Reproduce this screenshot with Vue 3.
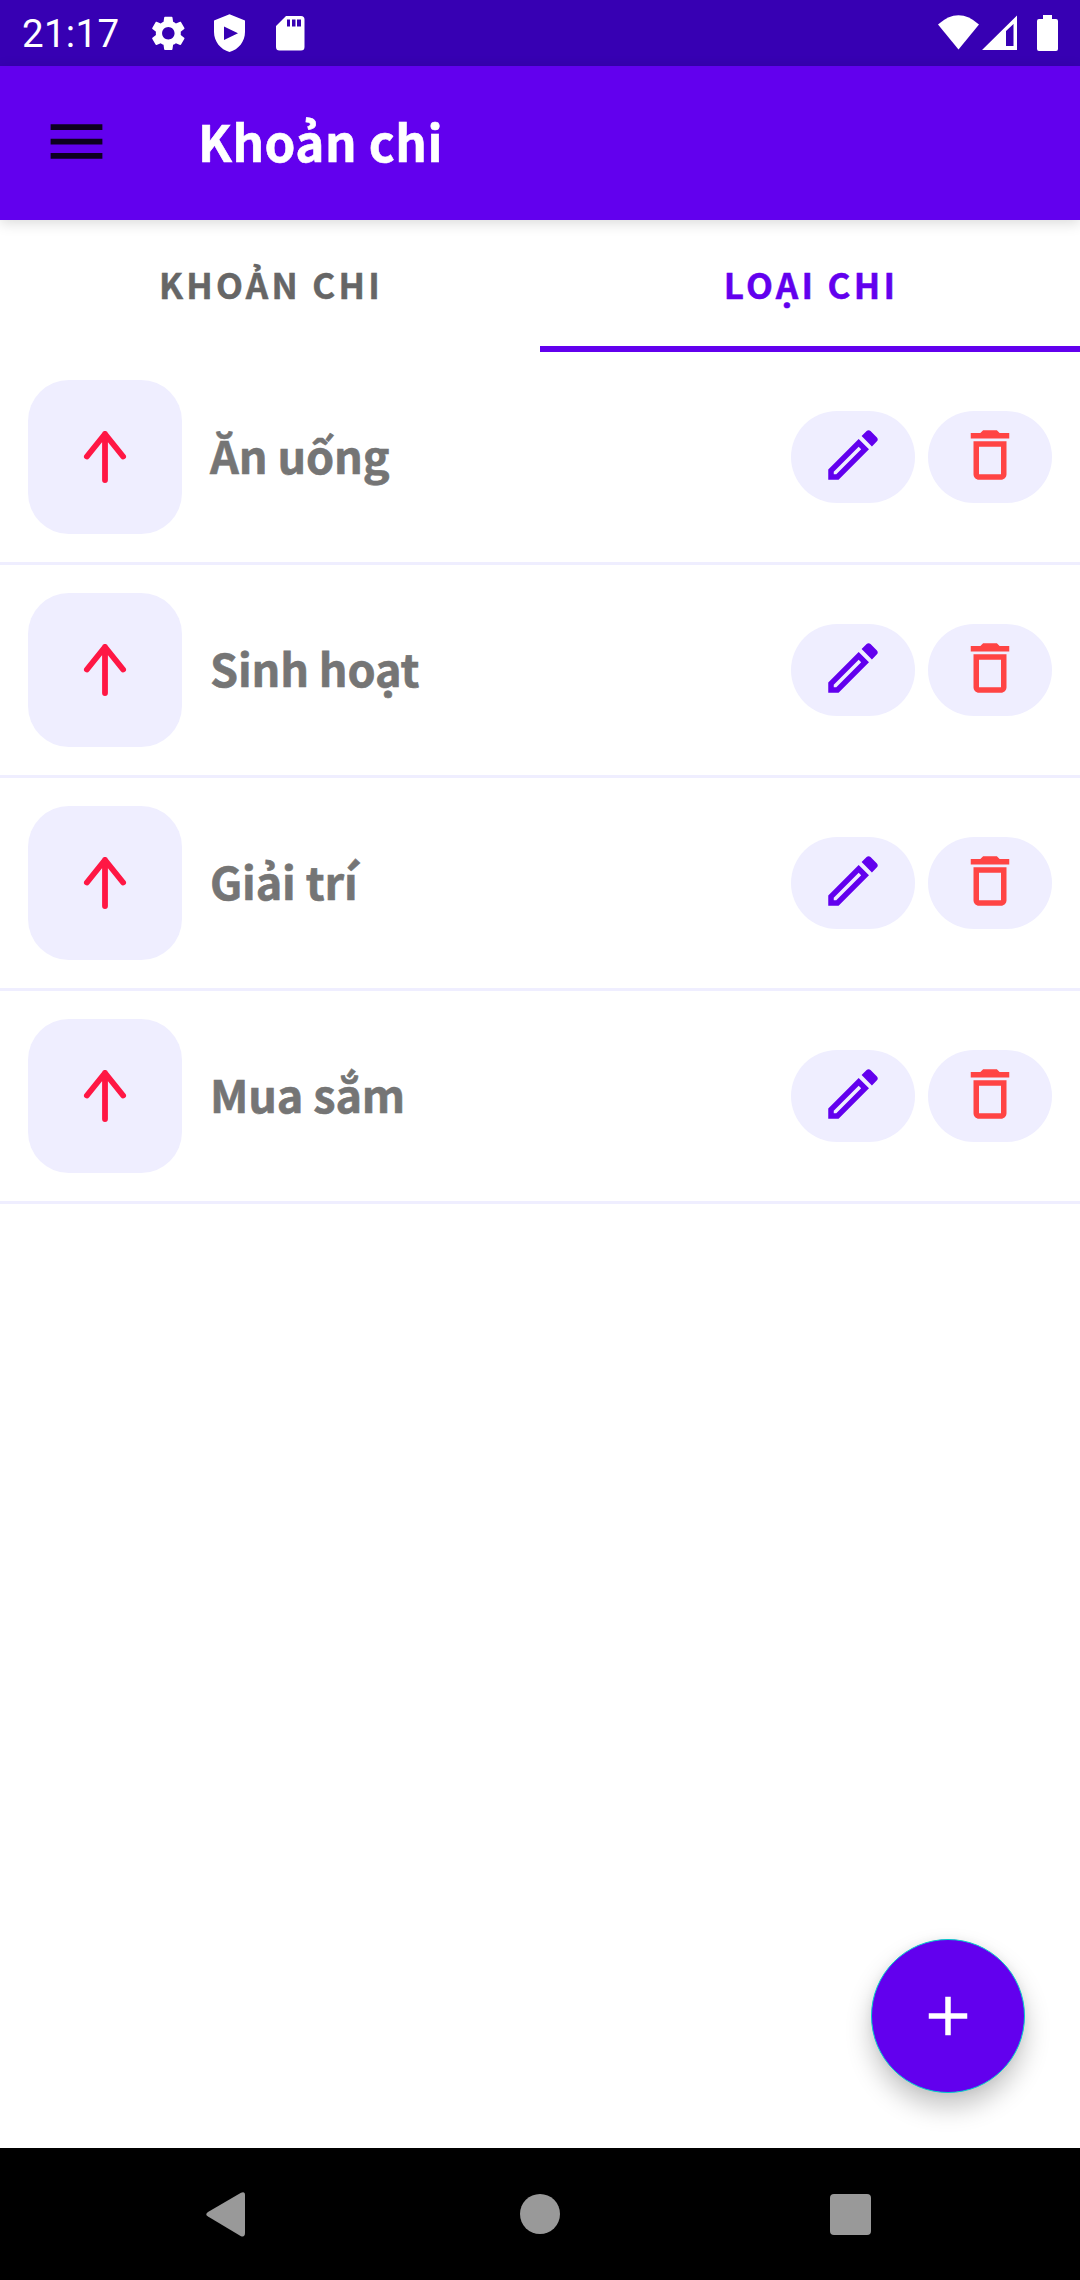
<script setup>
const tabs = [
  { label: 'KHOẢN CHI', active: false },
  { label: 'LOẠI CHI', active: true },
]
const categories = ['Ăn uống', 'Sinh hoạt', 'Giải trí', 'Mua sắm']
</script>

<template>
  <div class="screen">
    <header class="status">
      <span class="clock">21:17</span>
      <svg class="status-icons" width="160" height="66" viewBox="0 0 160 66" fill="#fff">
        <path
          transform="translate(7.500 12.5) scale(1.735)"
          d="M19.14 12.94c.04-.3.06-.61.06-.94 0-.32-.02-.64-.07-.94l2.03-1.58c.18-.14.23-.41.12-.61l-1.92-3.32c-.12-.22-.37-.29-.59-.22l-2.39.96c-.5-.38-1.03-.7-1.62-.94l-.36-2.54c-.04-.24-.24-.41-.48-.41h-3.84c-.24 0-.43.17-.47.41l-.36 2.54c-.59.24-1.13.57-1.62.94l-2.39-.96c-.22-.08-.47 0-.59.22L2.74 8.87c-.12.21-.08.47.12.61l2.03 1.58c-.05.3-.09.63-.09.94s.02.64.07.94l-2.03 1.58c-.18.14-.23.41-.12.61l1.92 3.32c.12.22.37.29.59.22l2.39-.96c.5.38 1.03.7 1.62.94l.36 2.54c.05.24.24.41.48.41h3.84c.24 0 .44-.17.47-.41l.36-2.54c.59-.24 1.13-.56 1.62-.94l2.39.96c.22.08.47 0 .59-.22l1.92-3.32c.12-.22.07-.47-.12-.61l-2.01-1.58zM12 15.6c-1.98 0-3.6-1.62-3.6-3.6s1.62-3.6 3.6-3.6 3.6 1.62 3.6 3.6-1.62 3.6-3.6 3.6z"
        />
        <path
          fill-rule="evenodd"
          d="M89.500 14.300 L105 20.500 V32 C105 41.500 98.500 49.500 89.500 52 C80.500 49.500 74 41.500 74 32 V20.500 Z M84 26.500 V40 L98 33.200 Z"
        />
        <path
          fill-rule="evenodd"
          d="M146 16 H161 Q164.500 16 164.500 19.500 V47 Q164.500 50.500 161 50.500 H139.500 Q136 50.500 136 47 V26 Z M147 19.500 V26.500 H150 V19.500 Z M152 19.500 V26.500 H155.500 V19.500 Z M157 19.500 V26.500 H161 V19.500 Z"
        />
      </svg>
      <svg class="signal-icons" width="130" height="66" viewBox="0 0 130 66" fill="#fff">
        <path d="M8 24.500 Q28.500 6 49 24.500 L28.500 49.500 Z" />
        <path fill-rule="evenodd" d="M52 50 L87 15.500 V50 Z M76 31 V46 H83.500 V24 Z" />
        <path d="M113 15 H122 V19 H126 Q128 19 128 21 V49 Q128 51 126 51 H109 Q107 51 107 49 V21 Q107 19 109 19 H113 Z" />
      </svg>
    </header>

    <div class="app-bar">
      <svg class="menu" width="69" height="69" viewBox="0 0 24 24">
        <path d="M3 18h18v-2H3v2zm0-5h18v-2H3v2zm0-7v2h18V6H3z" />
      </svg>
      <h1>Khoản chi</h1>
    </div>

    <nav class="tabs">
      <div v-for="tab in tabs" :key="tab.label" class="tab" :class="{ active: tab.active }">
        <span>{{ tab.label }}</span>
      </div>
    </nav>

    <main class="list">
      <div v-for="name in categories" :key="name" class="row">
        <div class="tile">
          <svg width="66" height="66" viewBox="0 0 66 66" fill="none" stroke="#ff1744" stroke-width="5.800" stroke-linecap="round" stroke-linejoin="round">
            <path d="M33 56 V10 M14.900 32.500 L33 10 L51.100 32.500" />
          </svg>
        </div>
        <span class="name">{{ name }}</span>
        <div class="pill">
          <svg width="66" height="66" viewBox="0 0 24 24" fill="#6200ee">
            <path d="M14.060 9.020l.92.920L5.920 19H5v-.920l9.060-9.060M17.660 3c-.250 0-.510.100-.700.290l-1.830 1.830 3.750 3.750 1.830-1.830c.390-.390.390-1.020 0-1.410l-2.340-2.340c-.200-.200-.450-.290-.710-.290zm-3.600 3.190L3 17.250V21h3.750L17.810 9.940l-3.750-3.750z" />
          </svg>
        </div>
        <div class="pill">
          <svg width="66" height="66" viewBox="0 0 24 24" fill="#ff4444">
            <path d="M6 19c0 1.100.900 2 2 2h8c1.100 0 2-.900 2-2V7H6v12zM8 9h8v10H8V9zm7.500-5l-1-1h-5l-1 1H5v2h14V4z" />
          </svg>
        </div>
      </div>
    </main>

    <button class="fab" type="button" aria-label="Add">
      <svg width="66" height="66" viewBox="0 0 24 24" fill="#fff">
        <path d="M19 13h-6v6h-2v-6H5v-2h6V5h2v6h6v2z" />
      </svg>
    </button>

    <footer class="nav-bar">
      <svg width="1080" height="132" viewBox="0 0 1080 132" fill="#999">
        <path d="M241 44.700 Q245 43 245 47 V85 Q245 89.500 241 88.200 L208 68.500 Q204.500 66.300 208 64 Z" />
        <circle cx="540" cy="66" r="20" />
        <rect x="830" y="46" width="41" height="41" rx="4" />
      </svg>
    </footer>
  </div>
</template>

<style>
body {
  margin: 0;
  background: #fff;
}
</style>

<style scoped>
.screen {
  position: relative;
  display: flex;
  flex-direction: column;
  width: 1080px;
  height: 2280px;
  overflow: hidden;
  background: #fff;
  font-family: 'Noto Sans CJK SC', 'Noto Sans', sans-serif;
}
.status {
  display: flex;
  flex: none;
  height: 66px;
  background: #3700b3;
}
.clock {
  width: 118px;
  padding-left: 22px;
  font: 400 38.5px/68px Roboto, sans-serif;
  letter-spacing: 0.3px;
  color: #fff;
}
.status-icons,
.signal-icons {
  display: block;
  overflow: visible;
}
.signal-icons {
  margin-left: auto;
  margin-right: 20px;
}
.app-bar {
  position: relative;
  z-index: 1;
  display: flex;
  align-items: center;
  flex: none;
  height: 154px;
  box-sizing: border-box;
  padding: 0 42px 4px;
  background: #6200ee;
  box-shadow: 0 3px 13px rgba(0, 0, 0, 0.15);
}
.menu {
  fill: #000;
  fill-opacity: 0.87;
}
h1 {
  margin: 0 0 1px 87px;
  font-size: 49.4px;
  font-weight: 700;
  line-height: 66px;
  letter-spacing: 0.5px;
  -webkit-text-stroke: 0.6px currentColor;
  color: #fff;
}
.tabs {
  display: flex;
  flex: none;
  height: 132px;
}
.tab {
  flex: 1;
  box-sizing: border-box;
  padding-left: 2px;
  border-bottom: 6px solid transparent;
  font-size: 35px;
  font-weight: 700;
  line-height: 127px;
  letter-spacing: 3.25px;
  -webkit-text-stroke: 0.5px currentColor;
  text-align: center;
  color: #666;
}
.tab.active {
  color: #6200ee;
  border-bottom-color: #6200ee;
}
.list {
  flex: 1;
}
.row {
  display: flex;
  align-items: center;
  height: 210px;
  padding: 0 28px;
  border-bottom: 3px solid #efeeff;
}
.tile {
  display: flex;
  align-items: center;
  justify-content: center;
  width: 154px;
  height: 154px;
  border-radius: 41px;
  background: #efeeff;
}
.name {
  flex: 1;
  margin-left: 28px;
  padding-bottom: 5px;
  font-size: 45px;
  font-weight: 700;
  line-height: 60px;
  letter-spacing: -0.15px;
  -webkit-text-stroke: 0.6px currentColor;
  color: #757575;
}
.pill {
  display: flex;
  align-items: center;
  justify-content: center;
  width: 124px;
  height: 92px;
  margin-left: 13px;
  border-radius: 46px;
  background: #efeeff;
}
.pill svg {
  margin-bottom: 4px;
}
.fab {
  position: absolute;
  right: 55px;
  bottom: 187px;
  display: flex;
  align-items: center;
  justify-content: center;
  width: 154px;
  height: 154px;
  box-sizing: border-box;
  padding: 0;
  border: 1px solid #03cdca;
  border-radius: 50%;
  background: #6200ee;
  box-shadow: 0 14px 26px rgba(0, 0, 0, 0.23), 0 0 10px rgba(0, 0, 0, 0.05);
}
.nav-bar {
  flex: none;
  height: 132px;
  background: #000;
}
.nav-bar svg {
  display: block;
}
</style>
